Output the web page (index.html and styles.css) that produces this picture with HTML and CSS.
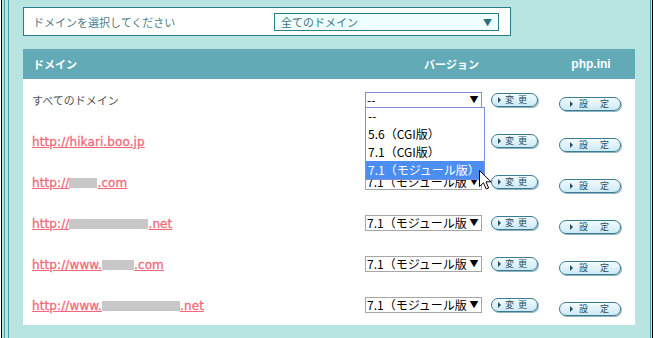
FILE: index.html
```html
<!DOCTYPE html>
<html lang="ja">
<head>
<meta charset="UTF-8">
<title>PHPバージョン設定</title>
<link rel="stylesheet" href="styles.css">
</head>
<body>

<div class="frame">
    <div class="rail">
        <div class="rail-inner">

            <!-- domain filter -->
            <div class="picker">
                <span class="picker-label">ドメインを選択してください</span>
                <div class="picker-select">
                    <span>全てのドメイン</span>
                    <span class="picker-arrow">▼</span>
                </div>
            </div>

            <!-- domain list -->
            <table class="domains">
                <colgroup>
                    <col class="col-domain">
                    <col class="col-version">
                    <col class="col-ini">
                </colgroup>
                <thead>
                    <tr>
                        <th class="th-domain">ドメイン</th>
                        <th>バージョン</th>
                        <th class="th-ini">php.ini</th>
                    </tr>
                </thead>
                <tbody>
                    <tr>
                        <td class="name">すべてのドメイン</td>
                        <td>
                            <div class="ver">
                                <div class="select is-open"><span class="select-text">--</span><span class="select-arrow">▼</span></div>
                                <span class="btn btn-change"><i class="tri"></i>変更</span>
                                <ul class="dropdown">
                                    <li>--</li>
                                    <li>5.6（CGI版）</li>
                                    <li>7.1（CGI版）</li>
                                    <li class="active">7.1（モジュール版）</li>
                                </ul>
                                <svg class="cursor" width="13" height="20" viewBox="0 0 13 20">
                                    <path d="M0.5 0.5 L0.5 16.5 L4.5 12.8 L7.2 19 L9.6 18 L7 11.8 L12 11.8 Z" fill="#fff" stroke="#000" stroke-width="1" stroke-linejoin="round"/>
                                </svg>
                            </div>
                        </td>
                        <td class="ini"><span class="btn btn-set"><i class="tri"></i>設定</span></td>
                    </tr>
                    <tr>
                        <td class="name"><a href="#">http://hikari.boo.jp</a></td>
                        <td>
                            <div class="ver">
                                <div class="select"><span class="select-text">7.1（モジュール版）</span><span class="select-arrow">▼</span></div>
                                <span class="btn btn-change"><i class="tri"></i>変更</span>
                            </div>
                        </td>
                        <td class="ini"><span class="btn btn-set"><i class="tri"></i>設定</span></td>
                    </tr>
                    <tr>
                        <td class="name"><a href="#">http://<span class="mask" style="width:28px"></span>.com</a></td>
                        <td>
                            <div class="ver">
                                <div class="select"><span class="select-text">7.1（モジュール版）</span><span class="select-arrow">▼</span></div>
                                <span class="btn btn-change"><i class="tri"></i>変更</span>
                            </div>
                        </td>
                        <td class="ini"><span class="btn btn-set"><i class="tri"></i>設定</span></td>
                    </tr>
                    <tr>
                        <td class="name"><a href="#">http://<span class="mask" style="width:79px"></span>.net</a></td>
                        <td>
                            <div class="ver">
                                <div class="select"><span class="select-text">7.1（モジュール版）</span><span class="select-arrow">▼</span></div>
                                <span class="btn btn-change"><i class="tri"></i>変更</span>
                            </div>
                        </td>
                        <td class="ini"><span class="btn btn-set"><i class="tri"></i>設定</span></td>
                    </tr>
                    <tr>
                        <td class="name"><a href="#">http://www.<span class="mask" style="width:32px"></span>.com</a></td>
                        <td>
                            <div class="ver">
                                <div class="select"><span class="select-text">7.1（モジュール版）</span><span class="select-arrow">▼</span></div>
                                <span class="btn btn-change"><i class="tri"></i>変更</span>
                            </div>
                        </td>
                        <td class="ini"><span class="btn btn-set"><i class="tri"></i>設定</span></td>
                    </tr>
                    <tr>
                        <td class="name"><a href="#">http://www.<span class="mask" style="width:78px"></span>.net</a></td>
                        <td>
                            <div class="ver">
                                <div class="select"><span class="select-text">7.1（モジュール版）</span><span class="select-arrow">▼</span></div>
                                <span class="btn btn-change"><i class="tri"></i>変更</span>
                            </div>
                        </td>
                        <td class="ini"><span class="btn btn-set"><i class="tri"></i>設定</span></td>
                    </tr>
                </tbody>
            </table>

        </div>
    </div>
</div>

</body>
</html>
```

FILE: styles.css
```css
body {
    margin: 0;
    background: #fff;
    font-family: "Noto Sans CJK JP", sans-serif;
}
.frame {
    margin-left: 1px;
    width: 652px;
    height: 338px;
    box-sizing: border-box;
    border-left: 1px solid #000;
    border-right: 1px solid #000;
    background: #b8e4e2;
    overflow: hidden;
}
.rail {
    margin: 0 1px 0 2px;
    height: 100%;
    box-sizing: border-box;
    border-left: 1px solid #4c9ea6;
    border-right: 1px solid #4c9ea6;
}
.rail-inner {
    margin-left: 3px;
    height: 100%;
    box-sizing: border-box;
    border-left: 1px solid #4c9ea6;
    padding: 7px 0 0 14px;
}

/* domain filter box */
.picker {
    display: flex;
    align-items: center;
    width: 488px;
    height: 29px;
    box-sizing: border-box;
    padding: 1px 0 0 9px;
    border: 1px solid #2c7d8a;
    background: #fff;
}
.picker-label {
    width: 241px;
    font-size: 11px;
    color: #4f7d89;
}
.picker-select {
    display: flex;
    align-items: center;
    justify-content: space-between;
    width: 225px;
    height: 18px;
    box-sizing: border-box;
    padding: 0 6px 0 6px;
    border: 1px solid #2c7d8a;
    background: #effffe;
    font-size: 11px;
    color: #3f7585;
}
.picker-arrow {
    font-size: 9px;
    color: #2c6f7e;
}

/* table */
.domains {
    margin-top: 13px;
    width: 612px;
    border-collapse: collapse;
    table-layout: fixed;
    background: #fff;
}
.col-domain { width: 335px; }
.col-version { width: 187px; }
.col-ini { width: 90px; }
th {
    height: 30px;
    padding: 0;
    background: #62aab6;
    color: #fff;
    font-size: 11px;
    font-weight: bold;
    text-align: center;
}
.th-domain {
    text-align: left;
    padding-left: 10px;
}
.th-ini {
    font-family: "Liberation Sans", Arial, sans-serif;
    font-size: 12px;
    padding-left: 2px;
}
td {
    height: 41px;
    padding: 0;
    vertical-align: middle;
}
.name {
    padding-left: 9px;
    font-size: 11px;
    color: #555;
}
.name a {
    font-family: "DejaVu Sans", Verdana, sans-serif;
    font-size: 12px;
    letter-spacing: 0.1px;
    color: #f4687a;
    -webkit-text-stroke: 0.3px #f4687a;
    text-decoration: underline;
}
.mask {
    display: inline-block;
    height: 10px;
    background: #c8c8c8;
    vertical-align: -1px;
}

/* version cell */
.ver {
    position: relative;
    display: flex;
    align-items: center;
    gap: 9px;
    padding-left: 7px;
}
.select {
    display: flex;
    align-items: center;
    width: 117px;
    height: 16px;
    box-sizing: border-box;
    border: 1px solid #a6a6a6;
    background: #fff;
    font-size: 12px;
    color: #000;
}
.select.is-open {
    border-color: #7b8fdc;
}
.select-text {
    flex: 1;
    min-width: 0;
    overflow: hidden;
    white-space: nowrap;
    padding-left: 1px;
    line-height: 14px;
}
.select-arrow {
    flex: none;
    width: 14px;
    font-size: 9px;
    text-align: center;
}
.dropdown {
    position: absolute;
    left: 7px;
    top: 15px;
    z-index: 2;
    width: 120px;
    margin: 0;
    padding: 0;
    list-style: none;
    box-sizing: border-box;
    border: 1px solid #7b8fdc;
    background: #fff;
}
.dropdown li {
    height: 18px;
    line-height: 18px;
    padding-left: 2px;
    font-size: 12px;
    color: #000;
    white-space: nowrap;
}
.dropdown li:first-child {
    height: 17px;
    line-height: 16px;
}
.dropdown li.active {
    background: #4c8ef0;
    color: #fff;
}
.cursor {
    position: absolute;
    left: 121px;
    top: 78px;
    z-index: 3;
}

/* buttons */
.btn {
    display: inline-flex;
    align-items: center;
    height: 14px;
    box-sizing: border-box;
    border: 1px solid #3b7b93;
    border-radius: 7px;
    background: linear-gradient(#f2fbfe, #cde9f4);
    box-shadow: 1px 1px 0 #8fb2bd;
    font-size: 9px;
    color: #234f63;
    white-space: nowrap;
}
.btn-change {
    width: 47px;
    padding-left: 6px;
    letter-spacing: 4px;
}
.btn-set {
    width: 62px;
    padding-left: 10px;
    letter-spacing: 12px;
}
.tri {
    display: inline-block;
    width: 0;
    height: 0;
    margin-right: 4px;
    border-left: 3px solid #234f63;
    border-top: 3px solid transparent;
    border-bottom: 3px solid transparent;
}
.btn-set .tri {
    margin-right: 6px;
}
.ini {
    text-align: center;
}
```
